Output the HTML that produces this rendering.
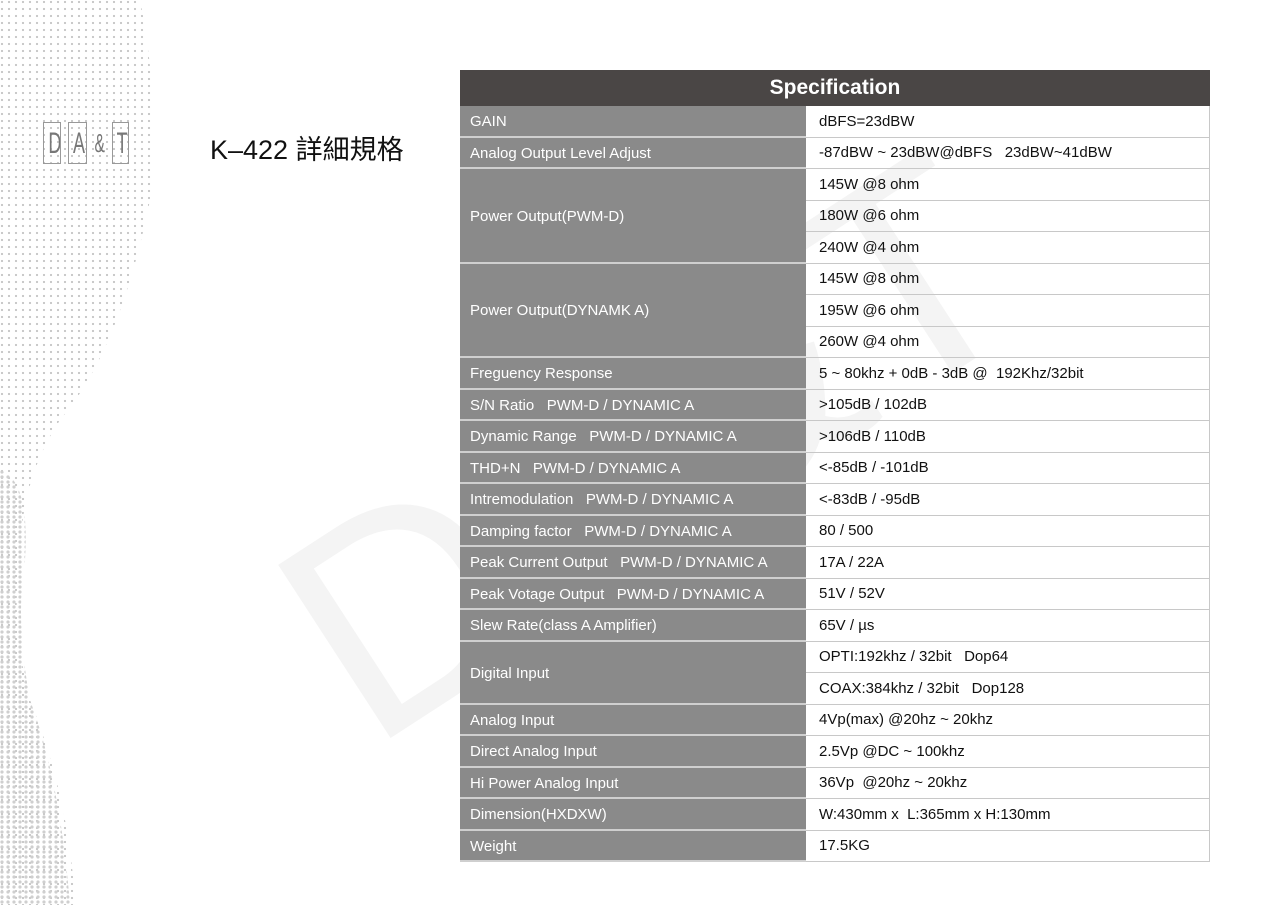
<!DOCTYPE html>
<html><head><meta charset="utf-8"><style>
html,body{margin:0;padding:0;}
body{width:1280px;height:905px;position:relative;overflow:hidden;background:#fff;font-family:"Liberation Sans","Noto Sans CJK TC",sans-serif;}
.wm{position:absolute;left:395px;top:490px;height:300px;line-height:300px;font-size:300px;font-weight:normal;color:#f4f4f4;transform:rotate(-33deg);transform-origin:0 100%;white-space:nowrap;z-index:0;}
.grid{position:absolute;left:460px;top:70px;width:750px;display:grid;grid-template-columns:346px 404px;grid-template-rows:36px repeat(24,31.5px);z-index:1;}
.hd{grid-column:1/3;background:#4a4645;color:#fff;font-weight:bold;font-size:21px;display:flex;align-items:center;justify-content:center;}
.l{grid-column:1;background:#8a8a8a;color:#fff;font-size:15px;display:flex;align-items:center;padding-left:10px;padding-top:2px;border-bottom:2px solid #cfcfcf;box-sizing:border-box;white-space:pre;}
.r{grid-column:2;color:#111;font-size:15px;display:flex;align-items:center;padding-left:13px;border:1px solid #c8c8c8;border-top:none;border-left:none;box-sizing:border-box;white-space:pre;}
.title{position:absolute;left:210px;top:128px;font-size:27px;color:#111;}
.logo{position:absolute;top:122px;height:42px;border:1px solid #999;color:#777;font-size:30px;line-height:42px;text-align:center;box-sizing:border-box;font-family:"Liberation Sans",sans-serif;overflow:hidden;}
.logo span{display:inline-block;transform:scaleX(0.6);}
</style></head><body>
<svg width="200" height="905" style="position:absolute;left:0;top:0;z-index:0">
<defs><pattern id="p" width="7" height="7" patternUnits="userSpaceOnUse"><circle cx="2" cy="2" r="1.1" fill="#c4c4c4"/></pattern>
<pattern id="p2" width="6" height="5" patternUnits="userSpaceOnUse"><circle cx="2" cy="2" r="1.6" fill="#cfcfcf"/></pattern></defs>
<path d="M0 0 L140 0 Q160 100 150 200 Q120 350 60 420 Q20 480 20 560 Q10 620 30 700 Q70 800 75 905 L0 905 Z" fill="url(#p)"/>
<path d="M0 470 Q30 480 25 560 Q15 620 30 700 Q60 780 70 905 L0 905 Z" fill="url(#p2)"/>
</svg>
<div class="wm">DA&amp;T</div>
<div class="logo" style="left:43px;width:18px"><span>D</span></div>
<div class="logo" style="left:68px;width:19px"><span>A</span></div>
<div class="logo" style="left:90px;width:20px;border:none;font-size:26px"><span>&amp;</span></div>
<div class="logo" style="left:112px;width:17px"><span>T</span></div>
<div class="title">K–422 詳細規格</div>
<div class="grid">
<div class="hd">Specification</div>
<div class="l">GAIN</div><div class="r">dBFS=23dBW</div>
<div class="l">Analog Output Level Adjust</div><div class="r">-87dBW ~ 23dBW@dBFS   23dBW~41dBW</div>
<div class="l" style="grid-row:span 3">Power Output(PWM-D)</div><div class="r">145W @8 ohm</div><div class="r">180W @6 ohm</div><div class="r">240W @4 ohm</div>
<div class="l" style="grid-row:span 3">Power Output(DYNAMK A)</div><div class="r">145W @8 ohm</div><div class="r">195W @6 ohm</div><div class="r">260W @4 ohm</div>
<div class="l">Freguency Response</div><div class="r">5 ~ 80khz + 0dB - 3dB @  192Khz/32bit</div>
<div class="l">S/N Ratio   PWM-D / DYNAMIC A</div><div class="r">&gt;105dB / 102dB</div>
<div class="l">Dynamic Range   PWM-D / DYNAMIC A</div><div class="r">&gt;106dB / 110dB</div>
<div class="l">THD+N   PWM-D / DYNAMIC A</div><div class="r">&lt;-85dB / -101dB</div>
<div class="l">Intremodulation   PWM-D / DYNAMIC A</div><div class="r">&lt;-83dB / -95dB</div>
<div class="l">Damping factor   PWM-D / DYNAMIC A</div><div class="r">80 / 500</div>
<div class="l">Peak Current Output   PWM-D / DYNAMIC A</div><div class="r">17A / 22A</div>
<div class="l">Peak Votage Output   PWM-D / DYNAMIC A</div><div class="r">51V / 52V</div>
<div class="l">Slew Rate(class A Amplifier)</div><div class="r">65V / µs</div>
<div class="l" style="grid-row:span 2">Digital Input</div><div class="r">OPTI:192khz / 32bit   Dop64</div><div class="r">COAX:384khz / 32bit   Dop128</div>
<div class="l">Analog Input</div><div class="r">4Vp(max) @20hz ~ 20khz</div>
<div class="l">Direct Analog Input</div><div class="r">2.5Vp @DC ~ 100khz</div>
<div class="l">Hi Power Analog Input</div><div class="r">36Vp  @20hz ~ 20khz</div>
<div class="l">Dimension(HXDXW)</div><div class="r">W:430mm x  L:365mm x H:130mm</div>
<div class="l">Weight</div><div class="r">17.5KG</div>
</div>
</body></html>
